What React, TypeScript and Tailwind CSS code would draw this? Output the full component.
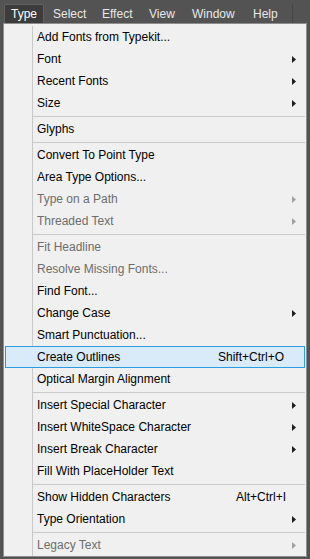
import React from 'react';

type Entry =
    | { sep: true }
    | { label: string; disabled?: boolean; sub?: boolean; shortcut?: string; active?: boolean; sep?: false };

const entries: Entry[] = [
    { label: 'Add Fonts from Typekit...' },
    { label: 'Font', sub: true },
    { label: 'Recent Fonts', sub: true },
    { label: 'Size', sub: true },
    { sep: true },
    { label: 'Glyphs' },
    { sep: true },
    { label: 'Convert To Point Type' },
    { label: 'Area Type Options...' },
    { label: 'Type on a Path', sub: true, disabled: true },
    { label: 'Threaded Text', sub: true, disabled: true },
    { sep: true },
    { label: 'Fit Headline', disabled: true },
    { label: 'Resolve Missing Fonts...', disabled: true },
    { label: 'Find Font...' },
    { label: 'Change Case', sub: true },
    { label: 'Smart Punctuation...' },
    { label: 'Create Outlines', shortcut: 'Shift+Ctrl+O', active: true },
    { label: 'Optical Margin Alignment' },
    { sep: true },
    { label: 'Insert Special Character', sub: true },
    { label: 'Insert WhiteSpace Character', sub: true },
    { label: 'Insert Break Character', sub: true },
    { label: 'Fill With PlaceHolder Text' },
    { sep: true },
    { label: 'Show Hidden Characters', shortcut: 'Alt+Ctrl+I' },
    { label: 'Type Orientation', sub: true },
    { sep: true },
    { label: 'Legacy Text', sub: true, disabled: true },
];

const topMenus = [
    { label: 'Select', w: 'w-[49px]', pl: 'pl-[9px]' },
    { label: 'Effect', w: 'w-[48px]', pl: 'pl-[9px]' },
    { label: 'View', w: 'w-[42px]', pl: 'pl-[8px]' },
    { label: 'Window', w: 'w-[62px]', pl: 'pl-[9px]' },
    { label: 'Help', w: 'w-[42px]', pl: 'pl-[8px]' },
];

function Arrow({ disabled }: { disabled?: boolean }) {
    return (
        <svg width="4" height="7" viewBox="0 0 4 7" className={disabled ? 'fill-[#a0a0a0]' : 'fill-[#1e1e1e]'}>
            <path d="M0 0L4 3.5L0 7z" />
        </svg>
    );
}

function RowContent({ item }: { item: Exclude<Entry, { sep: true }> }) {
    return (
        <>
            <span className={`flex-1 pl-[4px] ${item.disabled ? 'text-[#6d6d6d]' : 'text-black'}`}>{item.label}</span>
            {item.shortcut && <span className="text-black">{item.shortcut}</span>}
            <span className="w-[20px] pl-[6px] flex items-center">{item.sub && <Arrow disabled={item.disabled} />}</span>
        </>
    );
}

export default function App() {
    return (
        <div className="w-[310px] h-[559px] bg-[#535353] overflow-hidden text-[12px] leading-none font-['Liberation_Sans',Arial,sans-serif]">
            {/* menu bar */}
            <div className="h-[23px] pt-[4px] pl-[4px] flex items-start text-[#e8e8e8]">
                <div className="w-[40px] h-[19px] pl-[6px] flex items-center bg-[#3c3c3c] border border-b-0 border-[#626262] rounded-t-[2px] text-white">
                    Type
                </div>
                {topMenus.map((m) => (
                    <div key={m.label} className={`${m.w} ${m.pl} h-[19px] flex items-center`}>
                        {m.label}
                    </div>
                ))}
                <div className="ml-[5px] w-px h-[19px] bg-[#464646]" />
            </div>

            {/* dropdown */}
            <div className="ml-[3px] w-[304px] bg-[#f0f0f0] border border-[#8e8e8e] pt-[2px]">
                {entries.map((item, i) => {
                    if (item.sep) {
                        return (
                            <div key={i} className="h-[4px] flex">
                                <div className="w-[29px] border-r border-[#c9c9c9]" />
                                <div className="flex-1 flex items-center mr-[1px]">
                                    <div className="h-px w-full bg-[#cacaca]" />
                                </div>
                            </div>
                        );
                    }
                    if (item.active) {
                        return (
                            <div key={i} className="h-[22px] px-[1px]">
                                <div className="h-full flex items-center bg-[#d9eaf9] border border-[#2c9ce0]">
                                    <div className="w-[27px]" />
                                    <RowContent item={item} />
                                </div>
                            </div>
                        );
                    }
                    return (
                        <div key={i} className="h-[22px] flex items-center">
                            <div className="w-[29px] h-full border-r border-[#c9c9c9]" />
                            <RowContent item={item} />
                        </div>
                    );
                })}
            </div>
        </div>
    );
}
